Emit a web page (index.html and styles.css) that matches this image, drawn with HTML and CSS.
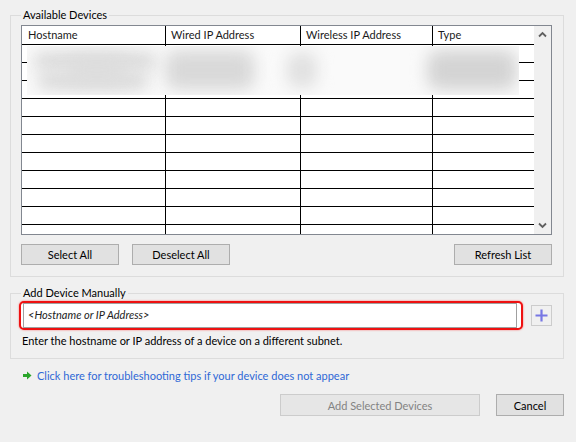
FILE: index.html
```html
<!DOCTYPE html>
<html>
<head>
<meta charset="utf-8">
<link rel="stylesheet" href="styles.css">
</head>
<body>
<div class="dialog">
  <fieldset class="group group-devices">
    <legend>Available Devices</legend>
    <div class="listbox">
      <div class="grid">
        <div class="row head">
          <div class="cell c1">Hostname</div>
          <div class="cell c2">Wired IP Address</div>
          <div class="cell c3">Wireless IP Address</div>
          <div class="cell c4">Type</div>
        </div>
        <div class="row"><div class="cell c1"></div><div class="cell c2"></div><div class="cell c3"></div><div class="cell c4"></div></div>
        <div class="row"><div class="cell c1"></div><div class="cell c2"></div><div class="cell c3"></div><div class="cell c4"></div></div>
        <div class="row"><div class="cell c1"></div><div class="cell c2"></div><div class="cell c3"></div><div class="cell c4"></div></div>
        <div class="row"><div class="cell c1"></div><div class="cell c2"></div><div class="cell c3"></div><div class="cell c4"></div></div>
        <div class="row"><div class="cell c1"></div><div class="cell c2"></div><div class="cell c3"></div><div class="cell c4"></div></div>
        <div class="row"><div class="cell c1"></div><div class="cell c2"></div><div class="cell c3"></div><div class="cell c4"></div></div>
        <div class="row"><div class="cell c1"></div><div class="cell c2"></div><div class="cell c3"></div><div class="cell c4"></div></div>
        <div class="row"><div class="cell c1"></div><div class="cell c2"></div><div class="cell c3"></div><div class="cell c4"></div></div>
        <div class="row"><div class="cell c1"></div><div class="cell c2"></div><div class="cell c3"></div><div class="cell c4"></div></div>
        <div class="row"><div class="cell c1"></div><div class="cell c2"></div><div class="cell c3"></div><div class="cell c4"></div></div>
        <div class="row"><div class="cell c1"></div><div class="cell c2"></div><div class="cell c3"></div><div class="cell c4"></div></div>
        <div class="blur">
          <span class="smudge s1"></span>
          <span class="smudge s2"></span>
          <span class="smudge s3"></span>
          <span class="smudge s4"></span>
          <span class="smudge s5"></span>
          <span class="smudge s6"></span>
        </div>
      </div>
      <div class="scrollbar">
        <svg class="chev" width="17" height="17" viewBox="0 0 17 17"><path d="M5 10.5 L8.5 7 L12 10.5" fill="none" stroke="#606060" stroke-width="1.8"/></svg>
        <svg class="chev" width="17" height="17" viewBox="0 0 17 17"><path d="M5 6.5 L8.5 10 L12 6.5" fill="none" stroke="#606060" stroke-width="1.8"/></svg>
      </div>
    </div>
    <div class="btn-row">
      <button class="btn">Select All</button>
      <button class="btn">Deselect All</button>
      <span class="spacer"></span>
      <button class="btn">Refresh List</button>
    </div>
  </fieldset>

  <fieldset class="group group-manual">
    <legend>Add Device Manually</legend>
    <div class="input-row">
      <div class="highlight">
        <div class="input">&lt;Hostname or IP Address&gt;</div>
      </div>
      <button class="plus" aria-label="Add">
        <svg width="13" height="13" viewBox="0 0 13 13"><path d="M6.5 0.5 V12.5 M0.5 6.5 H12.5" stroke="#7777e4" stroke-width="2.2"/></svg>
      </button>
    </div>
    <p class="hint">Enter the hostname or IP address of a device on a different subnet.</p>
  </fieldset>

  <a class="link" href="#">
    <svg width="9" height="9" viewBox="0 0 9 9"><path d="M0 3 H4 V0.5 L8.5 4.5 L4 8.5 V6 H0 Z" fill="#2aa52a"/></svg>
    <span>Click here for troubleshooting tips if your device does not appear</span>
  </a>

  <div class="footer">
    <button class="btn btn-wide" disabled>Add Selected Devices</button>
    <button class="btn btn-cancel">Cancel</button>
  </div>
</div>
</body>
</html>
```

FILE: styles.css
```css
* { box-sizing: border-box; }

html, body {
  margin: 0;
  padding: 0;
  background: #f0f0f0;
}

body {
  font-family: "Lato", "Liberation Sans", sans-serif;
  font-size: 11px;
  color: #000;
  width: 576px;
  height: 442px;
  overflow: hidden;
}

.dialog {
  padding-top: 7px;
}

.group {
  margin: 0 12px 0 10px;
  border: 1px solid #dcdcdc;
  min-width: 0;
}

.group legend {
  padding: 0 2px;
  line-height: 16px;
  font-size: 11px;
}

.group-devices {
  padding: 2px 11px 11px 10px;
}

.listbox {
  display: flex;
  width: 100%;
  height: 210px;
  border: 1px solid #828790;
  background: #fff;
}

.grid {
  position: relative;
  width: 512px;
  height: 208px;
  overflow: hidden;
  background: #fff;
}

.row {
  display: flex;
  height: 18px;
  border-bottom: 1px solid #000;
}

.row.head {
  height: 19px;
}

.cell {
  height: 100%;
  border-right: 1px solid #000;
  padding-left: 5px;
  line-height: 17px;
  white-space: nowrap;
  color: #1a1a1a;
}

.head .c1 { padding-left: 6px; }

.c1 { width: 144px; }
.c2 { width: 135px; }
.c3 { width: 132px; }
.c4 { flex: 1; border-right: none; }

.blur {
  position: absolute;
  left: 5px;
  top: 20px;
  width: 492px;
  height: 49px;
  background: #fafafa;
  overflow: hidden;
}

.smudge {
  position: absolute;
  background: #d9d9d9;
  border-radius: 12px;
  filter: blur(8px);
}

.s1 { left: 6px;   top: 6px;  width: 124px; height: 18px; }
.s2 { left: 10px;  top: 26px; width: 112px; height: 18px; }
.s3 { left: 138px; top: 4px;  width: 90px;  height: 40px; }
.s4 { left: 260px; top: 6px;  width: 30px;  height: 36px; background: #e0e0e0; }
.s5 { left: 400px; top: 4px;  width: 90px;  height: 40px; background: #d4d4d4; }
.s6 { left: 40px;  top: 10px; width: 60px;  height: 28px; background: #dddddd; }

.scrollbar {
  width: 17px;
  height: 208px;
  background: #f0f0f0;
  display: flex;
  flex-direction: column;
  justify-content: space-between;
}

.chev { display: block; }

.btn-row {
  display: flex;
  gap: 13px;
  margin-top: 9px;
}

.spacer { flex: 1; }

.btn {
  font-family: inherit;
  font-size: 11px;
  color: #000;
  width: 98px;
  height: 21px;
  padding: 0;
  margin: 0;
  background: #e1e1e1;
  border: 1px solid #adadad;
  border-radius: 0;
}

.btn[disabled] {
  background: #e6e6e6;
  border-color: #cccccc;
  color: #838383;
}

.group-manual {
  margin-top: 8px;
  padding: 0 11px 10px 8px;
}

.group-manual legend {
  margin-left: 2px;
}

.input-row {
  display: flex;
  align-items: center;
  gap: 8px;
}

.highlight {
  width: 504px;
  height: 29px;
  border: 2px solid #ee1111;
  border-radius: 5px;
  padding: 0 4px 0 2px;
  background: #fff;
  box-shadow: 0 0 2px rgba(255, 0, 0, 0.6);
}

.input {
  height: 25px;
  border: 1px solid #a0a0a0;
  background: #fff;
  font-style: italic;
  padding-left: 4px;
  line-height: 22px;
  color: #222;
}

.plus {
  width: 21px;
  height: 21px;
  padding: 0;
  margin: 0;
  border: 1px solid #cccccc;
  background: #f0f0f0;
  display: flex;
  align-items: center;
  justify-content: center;
}

.plus svg { display: block; }

.hint {
  margin: 3px 0 0 3px;
  line-height: 15px;
}

.link {
  display: flex;
  align-items: center;
  gap: 5px;
  margin-top: 9px;
  padding-left: 23px;
  line-height: 15px;
  color: #2f68d6;
  text-decoration: none;
}

.link svg { display: block; }

.footer {
  display: flex;
  justify-content: flex-end;
  gap: 16px;
  margin-top: 11px;
  padding-right: 12px;
}

.btn-wide {
  width: 200px;
  height: 22px;
}

.btn-cancel {
  width: 68px;
  height: 22px;
}
```
